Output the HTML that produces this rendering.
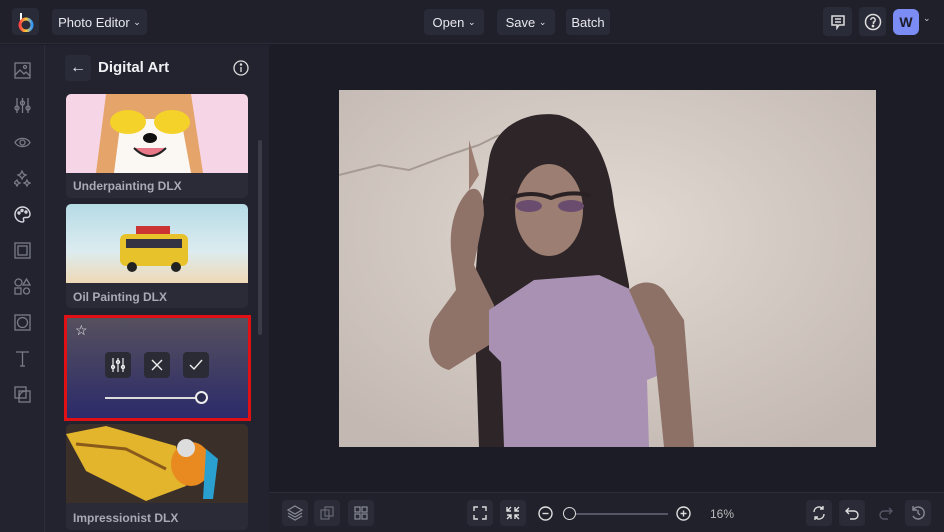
<!DOCTYPE html>
<html><head><meta charset="utf-8"><style>
*{box-sizing:border-box;margin:0;padding:0}
body{width:944px;height:532px;overflow:hidden;background:#1b1c26;font-family:"Liberation Sans",sans-serif;position:relative;color:#e6e6ec}
.a{position:absolute}
.top{left:0;top:0;width:944px;height:44px;background:#1f2029;border-bottom:1px solid #2b2c38}
.btn{position:absolute;background:#2a2b38;border-radius:4px;font-size:13px;color:#e8e8ee;display:flex;align-items:center;justify-content:center}
.side{left:0;top:45px;width:45px;height:487px;background:#22232e;border-right:1px solid #2c2d39}
.panel{left:45px;top:45px;width:224px;height:487px;background:#22232e}
.card{position:absolute;left:66px;width:182px;background:#2a2b37;border-radius:5px;overflow:hidden}
.lbl{position:absolute;left:7px;font-size:12px;font-weight:bold;color:#a9aab6}
.ic{position:absolute;left:14px;width:17px;height:17px}
.bb{left:269px;top:492px;width:675px;height:40px;background:#20212b;border-top:1px solid #2c2d39}
.sq{position:absolute;width:26px;height:26px;background:#2a2b37;border-radius:4px;top:7px}
</style></head><body>
<div class="a top">
 <div class="btn" style="left:12px;top:8px;width:27px;height:27px"><svg width="18" height="20" viewBox="0 0 18 20"><line x1="4" y1="1" x2="4" y2="10" stroke="#fff" stroke-width="2"/><circle cx="9" cy="13" r="6" fill="none" stroke="url(#g)" stroke-width="3"/><defs><linearGradient id="g"><stop offset="0" stop-color="#f44"/><stop offset=".5" stop-color="#fc3"/><stop offset="1" stop-color="#39f"/></linearGradient></defs></svg></div>
 <div class="btn" style="left:52px;top:9px;width:95px;height:26px">Photo Editor&nbsp;<span style="font-size:9px">⌄</span></div>
 <div class="btn" style="left:424px;top:9px;width:60px;height:26px">Open&nbsp;<span style="font-size:9px">⌄</span></div>
 <div class="btn" style="left:497px;top:9px;width:58px;height:26px">Save&nbsp;<span style="font-size:9px">⌄</span></div>
 <div class="btn" style="left:566px;top:9px;width:44px;height:26px">Batch</div>
 <div class="btn" style="left:823px;top:7px;width:29px;height:29px"><svg width="16" height="16" viewBox="0 0 16 16" fill="none" stroke="#ddd" stroke-width="1.5"><path d="M2 2h12v9H9l-2 3v-3H2z"/><path d="M5 5h6M5 8h6"/></svg></div>
 <div class="btn" style="left:859px;top:7px;width:27px;height:29px"><svg width="18" height="18" viewBox="0 0 18 18" fill="none" stroke="#ddd" stroke-width="1.5"><circle cx="9" cy="9" r="7.5"/><path d="M6.8 7a2.2 2.2 0 1 1 2.7 2.1V11"/><circle cx="9" cy="13" r=".6" fill="#ddd"/></svg></div>
 <div class="btn" style="left:893px;top:9px;width:26px;height:26px;background:#7b8cf5;border-radius:6px;color:#1b1c26;font-weight:bold;font-size:14px">W</div>
 <div class="a" style="left:923px;top:13px;font-size:9px;color:#ccc">⌄</div>
</div>
<div class="a side">
 <svg class="ic" style="top:17px" viewBox="0 0 17 17" fill="none" stroke="#7a7b88" stroke-width="1.3"><rect x="1" y="1" width="15" height="15"/><path d="M1 13l5-5 4 4 2-2 4 4"/><circle cx="11" cy="5" r="1.5"/></svg>
 <svg class="ic" style="top:52px" viewBox="0 0 17 17" fill="none" stroke="#7a7b88" stroke-width="1.3"><path d="M3 1v15M8.5 1v15M14 1v15"/><circle cx="3" cy="11" r="2"/><circle cx="8.5" cy="6" r="2"/><circle cx="14" cy="11" r="2"/></svg>
 <svg class="ic" style="top:89px" viewBox="0 0 17 17" fill="none" stroke="#7a7b88" stroke-width="1.3"><path d="M1 8.5C4 3 13 3 16 8.5 13 14 4 14 1 8.5z"/><circle cx="8.5" cy="8.5" r="2.5"/></svg>
 <svg class="ic" style="top:125px" viewBox="0 0 17 17" fill="none" stroke="#7a7b88" stroke-width="1.3"><path d="M8 1l1.5 3L12 5l-2.5 1.5L8 9 6.5 6.5 4 5l2.5-1z"/><path d="M13 10l1 2 2 1-2 1-1 2-1-2-2-1 2-1zM3 10l1 2 2 1-2 1-1 2-1-2-2-1z"/></svg>
 <svg class="ic" style="top:161px" viewBox="0 0 17 17" fill="none" stroke="#d8d8e0" stroke-width="1.4"><path d="M8.5 1a7.5 7.5 0 1 0 0 15c1.5 0 1.5-1.5 1-2.5-.5-1 0-2 1.5-2h2A3 3 0 0 0 16 8.5 7.5 7.5 0 0 0 8.5 1z"/><circle cx="5" cy="7" r="1"/><circle cx="8" cy="4.5" r="1"/><circle cx="12" cy="6" r="1"/></svg>
 <svg class="ic" style="top:197px" viewBox="0 0 17 17" fill="none" stroke="#7a7b88" stroke-width="1.3"><rect x="1" y="1" width="15" height="15"/><rect x="4" y="4" width="9" height="9"/></svg>
 <svg class="ic" style="top:233px" viewBox="0 0 17 17" fill="none" stroke="#7a7b88" stroke-width="1.3"><circle cx="4.5" cy="4.5" r="3.5"/><path d="M12.5 1l3.5 6h-7z"/><rect x="1" y="10" width="6" height="6"/><circle cx="12.5" cy="13" r="3"/></svg>
 <svg class="ic" style="top:269px" viewBox="0 0 17 17" fill="none" stroke="#7a7b88" stroke-width="1.3"><rect x="1" y="1" width="15" height="15"/><circle cx="8.5" cy="8.5" r="5"/></svg>
 <svg class="ic" style="top:305px" viewBox="0 0 17 17" fill="none" stroke="#7a7b88" stroke-width="1.3"><path d="M2 2h13M8.5 2v14M6 16h5"/></svg>
 <svg class="ic" style="top:341px" viewBox="0 0 17 17" fill="none" stroke="#7a7b88" stroke-width="1.3"><rect x="1" y="1" width="11" height="11"/><rect x="5" y="5" width="11" height="11"/><path d="M5 12a7 7 0 0 1 7-7"/></svg>
</div>
<div class="a panel">
 <div class="btn" style="left:20px;top:10px;width:26px;height:26px;font-size:16px">←</div>
 <div class="a" style="left:53px;top:14px;font-size:15px;font-weight:bold;color:#f0f0f4">Digital Art</div>
 <svg class="a" style="left:188px;top:15px" width="16" height="16" viewBox="0 0 16 16" fill="none" stroke="#ddd" stroke-width="1.3"><circle cx="8" cy="8" r="7"/><path d="M8 7v5"/><circle cx="8" cy="4.5" r=".6" fill="#ddd"/></svg>
 <div class="a" style="left:213px;top:95px;width:4px;height:195px;background:#3a3b47;border-radius:2px"></div>
</div>
<div class="card" style="top:94px;height:104px">
 <svg width="182" height="79" viewBox="0 0 182 79"><rect width="182" height="79" fill="#f6d6e6"/><path d="M40 0h85l12 79H30z" fill="#e5a46a"/><path d="M55 25h60l10 54H48z" fill="#fbf8f4"/><ellipse cx="62" cy="28" rx="18" ry="12" fill="#f5d22a"/><ellipse cx="106" cy="28" rx="18" ry="12" fill="#f5d22a"/><ellipse cx="84" cy="44" rx="7" ry="5" fill="#111"/><path d="M68 54q16 16 32 0" fill="#e87888" stroke="#222" stroke-width="2"/></svg>
 <div class="lbl" style="top:85px">Underpainting DLX</div>
</div>
<div class="card" style="top:204px;height:104px">
 <svg width="182" height="79" viewBox="0 0 182 79"><defs><linearGradient id="s" x1="0" y1="0" x2="0" y2="1"><stop offset="0" stop-color="#b6dbe6"/><stop offset=".6" stop-color="#dcecf0"/><stop offset="1" stop-color="#efd9b5"/></linearGradient></defs><rect width="182" height="79" fill="url(#s)"/><rect x="54" y="30" width="68" height="32" rx="6" fill="#e8c22a"/><rect x="60" y="35" width="56" height="9" fill="#334"/><rect x="70" y="22" width="34" height="8" fill="#c33"/><circle cx="66" cy="63" r="5" fill="#222"/><circle cx="110" cy="63" r="5" fill="#222"/></svg>
 <div class="lbl" style="top:86px">Oil Painting DLX</div>
</div>
<div class="a" style="left:64px;top:315px;width:187px;height:106px;border:3px solid #e01015;background:linear-gradient(#56505e,#2c2b6a)">
 <div class="a" style="left:8px;top:4px;font-size:14px;color:#eee">☆</div>
 <div class="btn" style="left:38px;top:34px;width:26px;height:26px;background:#2a2b35"><svg width="14" height="16" viewBox="0 0 14 16" fill="none" stroke="#eee" stroke-width="1.2"><path d="M2 1v14M7 1v14M12 1v14"/><circle cx="2" cy="10" r="1.6"/><circle cx="7" cy="5" r="1.6"/><circle cx="12" cy="10" r="1.6"/></svg></div>
 <div class="btn" style="left:77px;top:34px;width:26px;height:26px;background:#2a2b35"><svg width="12" height="12" fill="none" stroke="#eee" stroke-width="1.4"><path d="M1 1l10 10M11 1L1 11"/></svg></div>
 <div class="btn" style="left:116px;top:34px;width:26px;height:26px;background:#2a2b35"><svg width="14" height="12" fill="none" stroke="#eee" stroke-width="1.4"><path d="M1 6l4 4 8-9"/></svg></div>
 <div class="a" style="left:38px;top:79px;width:92px;height:2px;background:#ddd"></div>
 <div class="a" style="left:128px;top:73px;width:13px;height:13px;border-radius:50%;border:2px solid #eee;background:#2a2a50"></div>
</div>
<div class="card" style="top:424px;height:106px">
 <svg width="182" height="79" viewBox="0 0 182 79"><rect width="182" height="79" fill="#3b2f2a"/><path d="M0 10l40-8 70 20 10 40-40 15-60-30z" fill="#e2b52c"/><path d="M10 20l50 5 40 20" stroke="#8a5a1a" stroke-width="3" fill="none"/><ellipse cx="125" cy="40" rx="20" ry="22" fill="#e88a20"/><circle cx="120" cy="24" r="9" fill="#ddd"/><path d="M140 25l12 10-5 40h-10z" fill="#2aa0d0"/></svg>
 <div class="lbl" style="top:87px">Impressionist DLX</div>
</div>
<svg class="a" style="left:339px;top:90px" width="537" height="357" viewBox="0 0 537 357">
 <defs><radialGradient id="w" cx=".5" cy=".4" r=".7"><stop offset="0" stop-color="#e3dad4"/><stop offset="1" stop-color="#c3b8b2"/></radialGradient></defs>
 <rect width="537" height="357" fill="url(#w)"/>
 <path d="M0 85l40-10 30 5 40-15 30-10 20-10" stroke="#a69a94" stroke-width="2" fill="none"/>
 <path d="M150 70c5-35 40-50 70-45 30 8 50 40 55 90l15 80 10 162H140l-5-150 5-70z" fill="#2e2528"/>
 <path d="M95 230c-10 20-5 45 15 50l40-25 5-40-20-40 10-50c0-20-5-30-15-25-10 10-20 30-18 60l5 40z" fill="#8f7368"/>
 <path d="M130 50l10 35-10 15z" fill="#9a7d70"/>
 <ellipse cx="210" cy="120" rx="34" ry="46" fill="#9c7f72"/>
 <path d="M172 108q20-8 40 0 20-8 40-2" stroke="#2a2124" stroke-width="4" fill="none"/>
 <ellipse cx="190" cy="116" rx="13" ry="6" fill="#6a4c6e"/><ellipse cx="232" cy="116" rx="13" ry="6" fill="#6a4c6e"/>
 <path d="M150 220l45-30 65-5 55 25 18 70-25 10 2 67H165l-3-85-12-12z" fill="#a891b3"/>
 <path d="M290 200c10-10 25-10 35 0l20 30 10 127h-30l-10-100z" fill="#8d7166"/>
</svg>
<div class="a bb">
 <div class="sq" style="left:13px"><svg width="26" height="26" viewBox="0 0 26 26" fill="none" stroke="#888a96" stroke-width="1.2"><path d="M13 6l7 4-7 4-7-4z"/><path d="M6 13l7 4 7-4M6 16l7 4 7-4"/></svg></div>
 <div class="sq" style="left:45px"><svg width="26" height="26" viewBox="0 0 26 26" fill="none" stroke="#666874" stroke-width="1.2"><rect x="7" y="10" width="8" height="9"/><rect x="11" y="7" width="8" height="9"/></svg></div>
 <div class="sq" style="left:79px"><svg width="26" height="26" viewBox="0 0 26 26" fill="none" stroke="#888a96" stroke-width="1.2"><rect x="7" y="7" width="5" height="5"/><rect x="14" y="7" width="5" height="5"/><rect x="7" y="14" width="5" height="5"/><rect x="14" y="14" width="5" height="5"/></svg></div>
 <div class="sq" style="left:198px"><svg width="26" height="26" viewBox="0 0 26 26" fill="none" stroke="#ddd" stroke-width="1.4"><path d="M7 11V7h4M15 7h4v4M19 15v4h-4M11 19H7v-4"/></svg></div>
 <div class="sq" style="left:231px"><svg width="26" height="26" viewBox="0 0 26 26" fill="none" stroke="#ddd" stroke-width="1.4"><path d="M7 7v4h4M7 11l4-4M19 7l-4 4M15 7v4h4M7 19l4-4M7 15h4v4M19 19l-4-4M15 19v-4h4"/></svg></div>
 <svg class="a" style="left:269px;top:13px" width="15" height="15" viewBox="0 0 15 15" fill="none" stroke="#ddd" stroke-width="1.4"><circle cx="7.5" cy="7.5" r="6.5"/><path d="M4.5 7.5h6"/></svg>
 <div class="a" style="left:304px;top:20px;width:95px;height:2px;background:#555766"></div>
 <div class="a" style="left:294px;top:14px;width:13px;height:13px;border-radius:50%;border:1.5px solid #ddd;background:#20212b"></div>
 <svg class="a" style="left:407px;top:13px" width="15" height="15" viewBox="0 0 15 15" fill="none" stroke="#ddd" stroke-width="1.4"><circle cx="7.5" cy="7.5" r="6.5"/><path d="M4.5 7.5h6M7.5 4.5v6"/></svg>
 <div class="a" style="left:441px;top:14px;font-size:12px;color:#bbb">16%</div>
 <div class="sq" style="left:537px"><svg width="26" height="26" viewBox="0 0 26 26" fill="none" stroke="#ddd" stroke-width="1.4"><path d="M8 12a5 5 0 0 1 9-3M18 14a5 5 0 0 1-9 3M17 6v3h-3M9 20v-3h3"/></svg></div>
 <div class="sq" style="left:570px"><svg width="26" height="26" viewBox="0 0 26 26" fill="none" stroke="#ddd" stroke-width="1.4"><path d="M10 8l-3 3 3 3M7 11h8a4 4 0 0 1 0 8h-4"/></svg></div>
 <svg class="a" style="left:604px;top:7px" width="26" height="26" viewBox="0 0 26 26" fill="none" stroke="#555766" stroke-width="1.4"><path d="M16 8l3 3-3 3M19 11h-8a4 4 0 0 0 0 8h4"/></svg>
 <div class="sq" style="left:636px"><svg width="26" height="26" viewBox="0 0 26 26" fill="none" stroke="#888a96" stroke-width="1.4"><path d="M8 10a6 6 0 1 1 0 6M8 6v4h4M13 10v3l2 2"/></svg></div>
</div>
</body></html>
